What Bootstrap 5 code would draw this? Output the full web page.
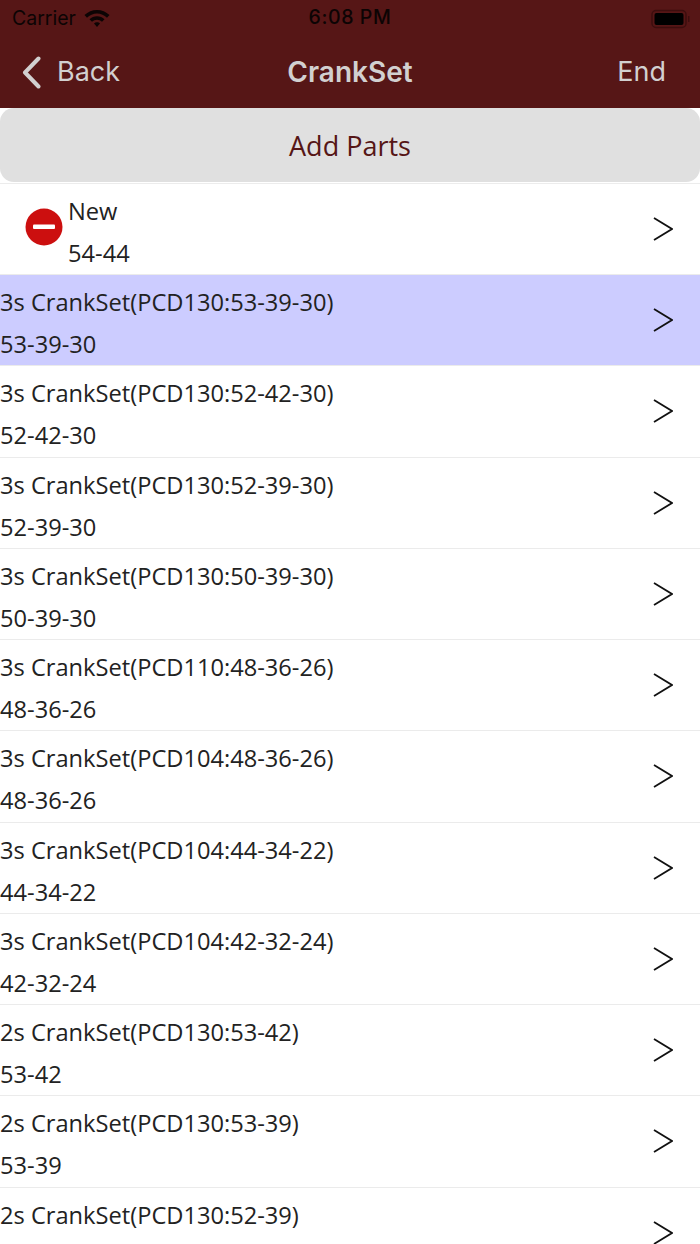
<!DOCTYPE html>
<html lang="en">
  <head>
    <meta charset="UTF-8" />
    <title>CrankSet</title>
    <link href="https://cdn.jsdelivr.net/npm/bootstrap@5.3.3/dist/css/bootstrap.min.css" rel="stylesheet" />
    <style>
      html, body { height: 1244px; overflow: hidden; }
      body { font-family: "Open Sans", sans-serif; background: #fff; color: #222; }
      .app-head { background: #561616; height: 108px; font-family: Inter, Roboto, sans-serif; }
      .status-row { height: 36px; padding: 1px 9px 0 12px; color: #0c0404; font-size: 19.500px; }
      .status-time { font-size: 19.500px; font-weight: 500; letter-spacing: .6px; }
      .title-row { height: 72px; padding: 0 34px 0 22px; color: #d2d0d0; font-size: 27px; }
      .title-row .app-title { font-weight: 600; font-size: 28px; }
      .add-btn { height: 74px; width: 100%; border: 0; border-radius: 14px; background: #e0e0e0; color: #561616; font-size: 27px; }
      .add-btn:hover { background: #e0e0e0; color: #561616; }
      .add-btn span { position: relative; top: 1px; }
      .part-list { margin-top: 1px; border-top: 1px solid #ececec; }
      .part-row { height: 91.25px; border-bottom: 1px solid #ebebeb; font-size: 23.650px; line-height: 42px; padding-right: 27px; overflow: hidden; }
      .part-row.is-active { background: #ccccff; }
      .part-row.is-new { height: 91px; padding-left: 25px; }
      .part-text { white-space: nowrap; padding-top: 6px; }
      .part-badge { margin-top: -5px; margin-right: 5px; }
    </style>
  </head>
  <body>
    <div class="app-head d-flex flex-column">
      <div class="status-row position-relative d-flex align-items-center justify-content-between">
        <div class="d-flex align-items-center gap-2">
          <span>Carrier</span>
          <svg width="26" height="19" viewBox="0 0 26 19" fill="#0c0404"><path d="M13 1C17.800 1 22 2.900 25.500 6.100L23 8.700C20.300 6.100 16.900 4.400 13 4.400S5.700 6.100 3 8.700L.5 6.100C4 2.900 8.200 1 13 1Z"/><path d="M13 7.200C15.900 7.200 18.500 8.400 20.500 10.300L18 12.800C16.600 11.500 14.900 10.700 13 10.700S9.400 11.500 8 12.800L5.500 10.300C7.500 8.400 10.100 7.200 13 7.200Z"/><path d="M13 13.200C14.200 13.200 15.200 13.700 16 14.400L13 18 10 14.400C10.800 13.700 11.800 13.200 13 13.200Z"/></svg>
        </div>
        <span class="status-time position-absolute top-50 start-50 translate-middle">6:08 PM</span>
        <svg width="40" height="20" viewBox="0 0 40 20"><rect x="1" y="1.500" width="34" height="17" rx="4" fill="none" stroke="#3c0e0e" stroke-width="1.500"/><rect x="3.500" y="4" width="29" height="12" rx="2" fill="#000"/><rect x="37" y="7" width="1.500" height="6" fill="#3c0e0e"/></svg>
      </div>
      <div class="title-row position-relative d-flex align-items-center justify-content-between">
        <div class="d-flex align-items-center gap-3">
          <svg width="19" height="33" viewBox="0 0 19 33" fill="none" stroke="#d2d0d0" stroke-width="4" stroke-linecap="round" stroke-linejoin="round"><path d="M16.500 2.500 3 16.500 16.500 30.500"/></svg>
          <span>Back</span>
        </div>
        <span class="app-title position-absolute top-50 start-50 translate-middle">CrankSet</span>
        <span>End</span>
      </div>
    </div>
    <button type="button" class="btn add-btn d-block p-0"><span>Add Parts</span></button>
    <div class="part-list" id="parts"></div>
    <script>
      const parts = [
        ["New", "54-44", "is-new"],
        ["3s CrankSet(PCD130:53-39-30)", "53-39-30", "is-active"],
        ["3s CrankSet(PCD130:52-42-30)", "52-42-30"],
        ["3s CrankSet(PCD130:52-39-30)", "52-39-30"],
        ["3s CrankSet(PCD130:50-39-30)", "50-39-30"],
        ["3s CrankSet(PCD110:48-36-26)", "48-36-26"],
        ["3s CrankSet(PCD104:48-36-26)", "48-36-26"],
        ["3s CrankSet(PCD104:44-34-22)", "44-34-22"],
        ["3s CrankSet(PCD104:42-32-24)", "42-32-24"],
        ["2s CrankSet(PCD130:53-42)", "53-42"],
        ["2s CrankSet(PCD130:53-39)", "53-39"],
        ["2s CrankSet(PCD130:52-39)", ""],
      ];
      const chevron = `<svg width="20" height="24" viewBox="0 0 20 24" fill="none" stroke="#111" stroke-width="1.800"><path d="M1 1 19 12 1 23"/></svg>`;
      const minus = `<svg class="part-badge" width="38" height="38" viewBox="0 0 38 38"><circle cx="19" cy="19" r="18.500" fill="#cc0f0f"/><rect x="8" y="16.500" width="22" height="4.500" rx="1" fill="#fff"/></svg>`;
      document.getElementById("parts").innerHTML = parts
        .map(
          ([name, teeth, cls]) => `
        <div class="part-row d-flex align-items-start justify-content-between ${cls || ""}">
          <div class="d-flex align-items-center">
            ${cls === "is-new" ? minus : ""}
            <div class="part-text"><div>${name}</div><div>${teeth}</div></div>
          </div>
          <div class="align-self-center d-flex">${chevron}</div>
        </div>`
        )
        .join("");
    </script>
    <script src="https://cdn.jsdelivr.net/npm/bootstrap@5.3.3/dist/js/bootstrap.bundle.min.js"></script>
  </body>
</html>
